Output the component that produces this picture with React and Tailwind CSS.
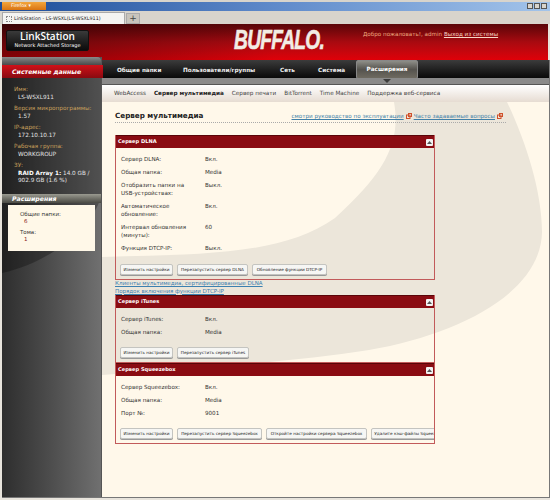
import React from 'react';

const font = { fontFamily: '"DejaVu Sans", Verdana, sans-serif' };

const Row = ({ label, value }) => (
  <div className="flex mb-[5px] leading-[8px]">
    <div className="w-[84px] shrink-0">{label}</div>
    <div>{value}</div>
  </div>
);

const Btn = ({ children, w }) => (
  <div className={`${w} h-[11px] shrink-0 rounded-[2px] bg-[#f6f6f4] border border-[#c4c4c0] shadow-[0_1px_0_#999] text-[4.2px] leading-[9px] text-center whitespace-nowrap overflow-hidden text-[#222]`}>
    {children}
  </div>
);

const Panel = ({ title, children, buttons, h }) => (
  <div className={`${h} border border-t-0 border-[#c25a5a] flex flex-col overflow-hidden`}>
    <div className="h-[13px] shrink-0 -mx-px bg-[#8a0c12] border-t border-[#5a0508] flex items-center justify-between pl-[3px] pr-[2px]">
      <span className="text-[5.1px] font-bold text-white leading-none">{title}</span>
      <span className="w-[7px] h-[7px] bg-[#f2f2f2] rounded-[1px] flex items-center justify-center">
        <svg width="5" height="3" viewBox="0 0 5 3"><path d="M2.5 0L5 3H0z" fill="#555" /></svg>
      </span>
    </div>
    <div className="pl-[5px] pt-[7px] text-[5.6px] text-[#333]">{children}</div>
    <div className="mt-auto mb-[4px] ml-[4px] flex gap-[4px]">{buttons}</div>
  </div>
);

const Ext = () => (
  <svg width="6" height="6" viewBox="0 0 6 6" className="inline-block mx-[2px]">
    <rect x="0.5" y="2" width="3.5" height="3.5" fill="none" stroke="#d0502a" />
    <rect x="2.5" y="0.5" width="3" height="3" fill="none" stroke="#d0502a" />
  </svg>
);

const Info = ({ label, children, mb = 'mb-[4px]' }) => (
  <div className={`${mb} text-[5.7px] leading-[7.5px]`}>
    <div className="text-[#c9a05c] pl-[12px]">{label}</div>
    <div className="text-[#e4e4e4] pl-[16px]">{children}</div>
  </div>
);

export default function App() {
  return (
    <div style={font} className="relative w-[550px] h-[500px] overflow-hidden flex flex-col bg-[#e8e4dc]">
      {/* window chrome */}
      <div className="h-[11px] shrink-0 border-t-2 border-[#d8d4cc] bg-gradient-to-r from-[#1c4c98] via-[#5f8aca] to-[#a3c4ea] flex justify-between pl-[2px] pr-[3px]">
        <div className="w-[44px] h-[8px] bg-gradient-to-b from-[#f3a53a] to-[#d9740f] text-[4.8px] leading-[8px] text-white pl-[9px]">Firefox ▾</div>
        <div className="flex gap-px pt-px">
          <div className="w-[6px] h-[6px] bg-[#d8d4cc] border border-[#555]" />
          <div className="w-[6px] h-[6px] bg-[#d8d4cc] border border-[#555]" />
          <div className="w-[6px] h-[6px] bg-[#d8d4cc] border border-[#555]" />
        </div>
      </div>
      <div className="h-[13px] shrink-0 bg-[#d8d4cc] flex items-end pl-[2px] gap-px">
        <div className="w-[123px] h-[12px] bg-[#f4f4f2] border border-b-0 border-[#aaa] flex items-center gap-[2px] pl-[3px] text-[4.8px] text-[#222] whitespace-nowrap">
          <span className="w-[6px] h-[6px] border border-dotted border-[#888] shrink-0" />
          LinkStation - LS-WSXL(LS-WSXL911)
        </div>
        <div className="w-[14px] h-[11px] bg-[#c8c4bc] border border-[#aaa] text-[9px] leading-[8px] text-center text-[#444]">+</div>
      </div>

      {/* header */}
      <div className="h-[36px] shrink-0 mx-[2px] bg-gradient-to-b from-[#5a0508] via-[#a80a10] to-[#e00008]">
        <div className="h-full flex bg-gradient-to-r from-black/40 via-transparent to-transparent">
          <div className="w-[83px] h-[21px] ml-[4px] mt-[6px] rounded-[2px] bg-gradient-to-b from-[#3a3a3a] to-[#0c0c0c] border border-[#111] text-white text-center">
            <div className="text-[10px] leading-[11px] font-semibold" style={{ fontFamily: '"Open Sans", sans-serif' }}>LinkStation</div>
            <div className="text-[5px] leading-[6px]">Network Attached Storage</div>
          </div>
          <div className="w-[129px] shrink-0 ml-[145px] mt-[5px] text-[27px] leading-[22px] font-bold italic text-[#f2ece4] tracking-[-1px] [-webkit-text-stroke:0.6px_#f2ece4] origin-left scale-x-[0.71] whitespace-nowrap" style={{ fontFamily: '"Liberation Sans", sans-serif' }}>
            BUFFALO.
          </div>
          <div className="mt-[6px] text-[5.6px] text-[#f0a880] whitespace-nowrap">
            Добро пожаловать!, admin <span className="underline text-[#f8d8c8]">Выход из системы</span>
          </div>
        </div>
      </div>

      {/* body */}
      <div className="flex-1 flex min-h-0 ml-[2px] mb-[2px] border-b border-r border-[#777]">
        <div className="relative w-[100px] shrink-0 -mt-[3px] z-10 bg-gradient-to-r from-[#2e2e2e] to-[#707070] border-r border-[#555]">
          <svg className="absolute inset-0" width="99" height="440" viewBox="0 0 99 440">
            <path d="M0 0H99V140C90 170 50 205 0 216Z" fill="#000" fillOpacity="0.28" />
          </svg>
          <div className="relative flex flex-col">
            <div className="h-[8px] rounded-tr-[4px] bg-gradient-to-b from-[#8a8a8a] to-[#4a4a4a]" />
            <div className="h-[13px] -mr-[2px] bg-gradient-to-b from-[#d01018] to-[#8a0a10] text-white text-[6.2px] font-bold italic leading-[13px] pl-[10px]">Системные данные</div>
            <div className="pt-[8px]">
              <Info label="Имя:">LS-WSXL911</Info>
              <Info label="Версия микропрограммы:">1.57</Info>
              <Info label="IP-адрес:">172.10.10.17</Info>
              <Info label="Рабочая группа:">WORKGROUP</Info>
              <Info label="ЗУ:" mb="mb-0"><span className="font-bold text-white">RAID Array 1:</span> 14.0 GB /<br />902.9 GB (1.6 %)</Info>
            </div>
            <div className="mt-[9px] h-[9px] bg-gradient-to-b from-[#9a9a90] to-[#4a4a44] text-white text-[6.2px] font-bold italic leading-[9px] pl-[10px]">Расширения</div>
            <div className="mt-[2px] mx-[6px] h-[46px] bg-[#fff8e8] pt-[6px] pl-[12px] text-[5.5px] leading-[7.5px] text-[#333]">
              <div>Общие папки:</div>
              <div className="text-[#8a1a1a] pl-[4px] mb-[3px]">6</div>
              <div>Тома:</div>
              <div className="text-[#8a1a1a] pl-[4px]">1</div>
            </div>
          </div>
        </div>

        <div className="flex-1 min-w-0 flex flex-col">
          {/* main nav */}
          <div className="h-[18px] shrink-0 bg-gradient-to-b from-[#3c3c3c] to-[#0a0a0a] flex pl-[15px] text-[5.7px] font-bold text-[#eee] leading-[20px] whitespace-nowrap">
            <div className="w-[66px]">Общие папки</div>
            <div className="w-[97px]">Пользователи/группы</div>
            <div className="w-[38px]">Сеть</div>
            <div className="w-[38px]">Система</div>
            <div className="w-[62px] h-[19px] rounded-[2px] bg-gradient-to-b from-[#8e8e88] via-[#55534e] to-[#6e6a60] border border-[#888] text-white text-center leading-[17px]">Расширения</div>
          </div>
          <div className="h-[7px] shrink-0 bg-[#8a8a8a] border-b border-[#555] flex pl-[281px]">
            <div className="w-0 h-0 mt-px border-x-[4px] border-x-transparent border-t-[4px] border-t-[#3c3c3c]" />
          </div>
          {/* sub nav */}
          <div className="h-[17px] shrink-0 bg-gradient-to-b from-white to-[#e6dcd2] flex gap-[8px] pl-[12px] text-[5.7px] leading-[17px] text-[#444] whitespace-nowrap">
            <span>WebAccess</span>
            <span className="font-bold text-[#222]">Сервер мультимедиа</span>
            <span>Сервер печати</span>
            <span>BitTorrent</span>
            <span>Time Machine</span>
            <span>Поддержка веб-сервиса</span>
          </div>
          {/* content */}
          <div className="relative flex-1 min-h-0 bg-[#fff8ea] overflow-hidden">
            <svg className="absolute inset-0" width="446" height="396" viewBox="0 0 446 396">
              <path d="M292 0 C299 40 284 70 233 116 C179 155 89 152 0 155 L0 273 C99 266 189 260 267 248 C359 232 439 190 440 130 C440 90 424 40 405 0 Z" fill="#ece6da" />
            </svg>
            <div className="relative pl-[13px] pr-[43px] pt-[8px]">
              <div className="flex items-end justify-between h-[13px] pb-[2px] border-b border-dotted border-[#aaa] text-[#222]">
                <span className="text-[7.2px] font-bold leading-[9px]">Сервер мультимедиа</span>
                <span className="text-[5.6px] text-[#4080a8] underline whitespace-nowrap pr-[1px] leading-[7px]">
                  смотри руководство по эксплуатации<Ext />Часто задаваемые вопросы<Ext />
                </span>
              </div>
            </div>
            <div className="relative w-[320px] ml-[13px] mt-[12px]">
              <Panel title="Сервер DLNA" h="h-[145px]" buttons={<>
                <Btn w="w-[53px]">Изменить настройки</Btn>
                <Btn w="w-[71px]">Перезапустить сервер DLNA</Btn>
                <Btn w="w-[75px]">Обновление функции DTCP-IP</Btn>
              </>}>
                <Row label="Сервер DLNA:" value="Вкл." />
                <Row label="Общая папка:" value="Media" />
                <Row label={<>Отобразить папки на<br />USB-устройствах:</>} value="Выкл." />
                <Row label={<>Автоматическое<br />обновление:</>} value="Вкл." />
                <Row label={<>Интервал обновления<br />(минуты):</>} value="60" />
                <Row label="Функция DTCP-IP:" value="Выкл." />
              </Panel>
              <div className="text-[5.5px] leading-[7.5px] text-[#3c80b0] underline">
                <div>Клиенты мультимедиа, сертифицированные DLNA</div>
                <div>Порядок включения функции DTCP-IP</div>
              </div>
              <Panel title="Сервер iTunes" h="h-[68px]" buttons={<>
                <Btn w="w-[53px]">Изменить настройки</Btn>
                <Btn w="w-[72px]">Перезапустить сервер iTunes</Btn>
              </>}>
                <Row label="Сервер iTunes:" value="Вкл." />
                <Row label="Общая папка:" value="Media" />
              </Panel>
              <Panel title="Сервер Squeezebox" h="h-[81px]" buttons={<>
                <Btn w="w-[53px]">Изменить настройки</Btn>
                <Btn w="w-[85px]">Перезапустить сервер Squeezebox</Btn>
                <Btn w="w-[101px]">Откройте настройки сервера Squeezebox</Btn>
                <Btn w="w-[78px]">Удалите кэш-файлы Squeezebox</Btn>
              </>}>
                <Row label="Сервер Squeezebox:" value="Вкл." />
                <Row label="Общая папка:" value="Media" />
                <Row label="Порт №:" value="9001" />
              </Panel>
            </div>
          </div>
        </div>
      </div>
    </div>
  );
}
